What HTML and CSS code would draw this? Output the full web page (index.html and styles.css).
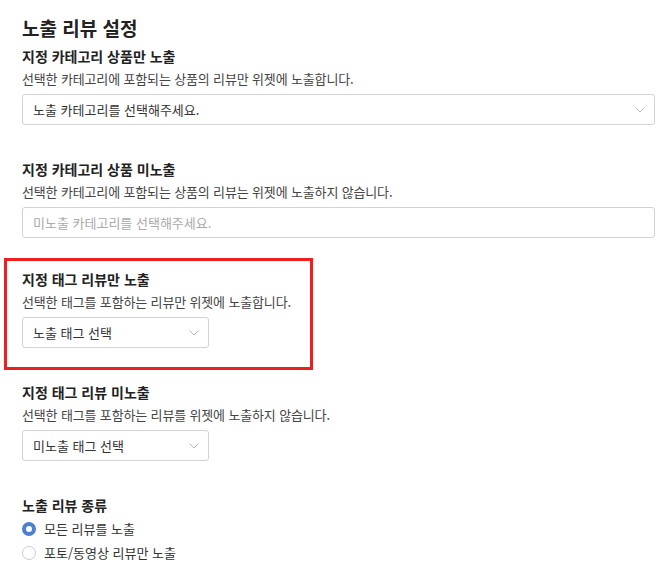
FILE: index.html
```html
<!DOCTYPE html>
<html lang="ko">
<head>
  <meta charset="UTF-8" />
  <meta name="viewport" content="width=device-width, initial-scale=1.0" />
  <title>노출 리뷰 설정</title>
  <link rel="stylesheet" href="styles.css">
</head>
<body>
  <div class="container">
    <h2>노출 리뷰 설정</h2>

    <div class="section">
      <div class="label">지정 카테고리 상품만 노출</div>
      <div class="desc">선택한 카테고리에 포함되는 상품의 리뷰만 위젯에 노출합니다.</div>
      <div class="select wide">
        <span>노출 카테고리를 선택해주세요.</span>
        <svg class="chevron" width="10" height="6" viewBox="0 0 10 6"><path d="M0.5 0.5 L5 5 L9.5 0.5" fill="none" stroke="#b5b5b5" stroke-width="1"/></svg>
      </div>
    </div>

    <div class="section">
      <div class="label">지정 카테고리 상품 미노출</div>
      <div class="desc">선택한 카테고리에 포함되는 상품의 리뷰는 위젯에 노출하지 않습니다.</div>
      <div class="select wide empty">
        <span>미노출 카테고리를 선택해주세요.</span>
      </div>
    </div>

    <div class="section highlight">
      <div class="label">지정 태그 리뷰만 노출</div>
      <div class="desc">선택한 태그를 포함하는 리뷰만 위젯에 노출합니다.</div>
      <div class="select small">
        <span>노출 태그 선택</span>
        <svg class="chevron" width="10" height="6" viewBox="0 0 10 6"><path d="M0.5 0.5 L5 5 L9.5 0.5" fill="none" stroke="#b5b5b5" stroke-width="1"/></svg>
      </div>
    </div>

    <div class="section">
      <div class="label">지정 태그 리뷰 미노출</div>
      <div class="desc">선택한 태그를 포함하는 리뷰를 위젯에 노출하지 않습니다.</div>
      <div class="select small">
        <span>미노출 태그 선택</span>
        <svg class="chevron" width="10" height="6" viewBox="0 0 10 6"><path d="M0.5 0.5 L5 5 L9.5 0.5" fill="none" stroke="#b5b5b5" stroke-width="1"/></svg>
      </div>
    </div>

    <div class="section">
      <div class="label">노출 리뷰 종류</div>
      <label class="radio"><span class="dot checked"></span>모든 리뷰를 노출</label>
      <label class="radio"><span class="dot"></span>포토/동영상 리뷰만 노출</label>
    </div>
  </div>
</body>
</html>
```

FILE: styles.css
```css
body {
  margin: 0;
  font-family: "Noto Sans CJK KR", "Noto Sans", sans-serif;
  color: #333;
  background: #fff;
}
.container {
  padding: 16px 16px 0 22px;
}
h2 {
  margin: 0;
  font-size: 19px;
  line-height: 24px;
  font-weight: 700;
  color: #222;
}
.section {
  margin-top: 34px;
}
h2 + .section {
  margin-top: 6px;
}
.label {
  font-size: 14px;
  line-height: 20px;
  font-weight: 700;
  color: #222;
}
.desc {
  margin-top: 3px;
  font-size: 13px;
  line-height: 20px;
  color: #444;
  letter-spacing: -0.15px;
}
.select {
  margin-top: 5px;
  height: 31px;
  box-sizing: border-box;
  border: 1px solid #d3d3d3;
  border-radius: 3px;
  padding: 0 9px 0 10px;
  display: flex;
  align-items: center;
  justify-content: space-between;
  font-size: 13px;
  color: #333;
}
.select.wide {
  width: 633px;
}
.select.small {
  width: 187px;
}
.select.empty {
  color: #aaa;
}
.highlight {
  margin-left: -18px;
  width: 309px;
  box-sizing: border-box;
  border: 3px solid #f01f1f;
  padding: 8px 15px 19px;
  margin-top: 20px;
}
.highlight + .section {
  margin-top: 12px;
}
.radio {
  display: flex;
  align-items: center;
  gap: 8px;
  font-size: 13px;
  line-height: 24px;
  color: #333;
}
.label + .radio {
  margin-top: 2px;
}
.dot {
  width: 14px;
  height: 14px;
  box-sizing: border-box;
  border-radius: 50%;
  border: 1px solid #ccc;
  background: #fff;
}
.dot.checked {
  border: 4px solid #4d80d1;
}
```
